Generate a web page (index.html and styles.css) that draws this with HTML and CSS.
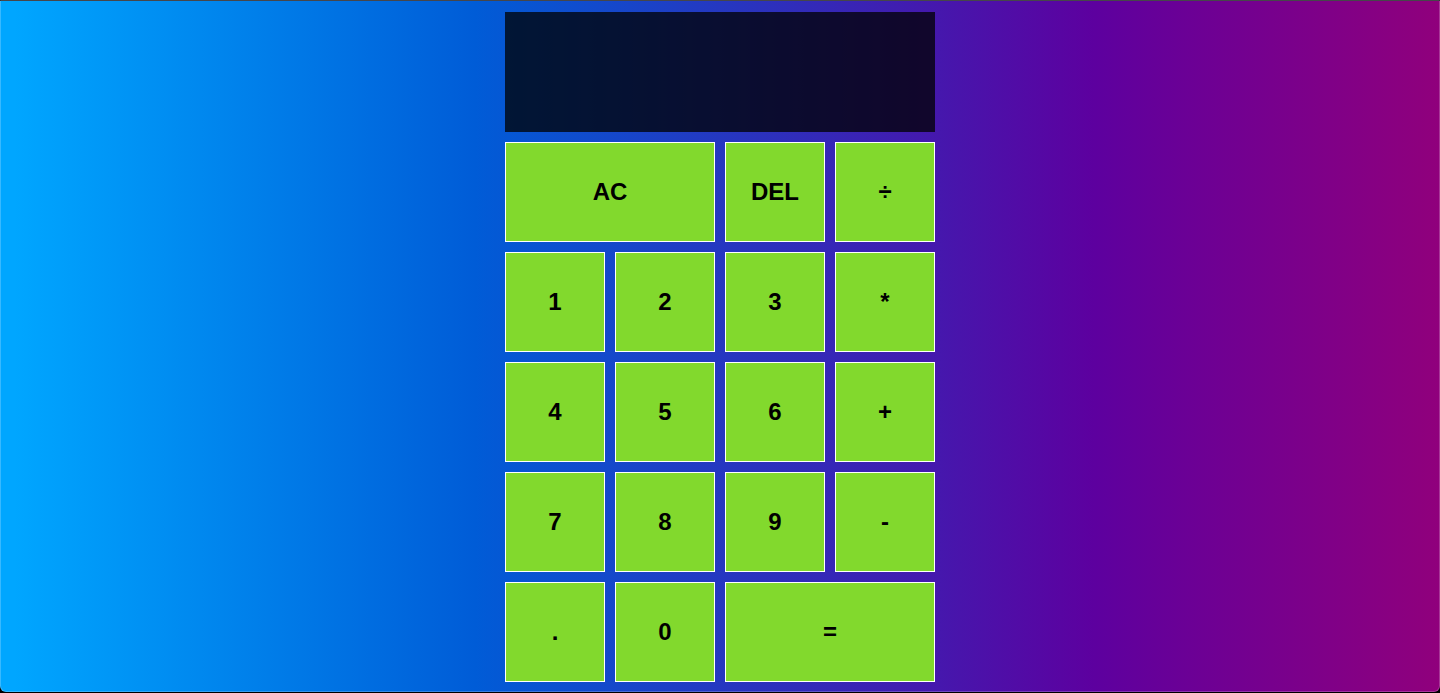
FILE: index.html
```html
<!DOCTYPE html>
<html lang="en">
<head>
<meta charset="utf-8">
<meta name="viewport" content="width=device-width, initial-scale=1">
<title>Calculator</title>
<link rel="stylesheet" href="styles.css">
</head>
<body>
<main class="calculator">
<output class="display" aria-label="Result"></output>
<button class="key wide" type="button">AC</button>
<button class="key" type="button">DEL</button>
<button class="key" type="button">÷</button>
<button class="key" type="button">1</button>
<button class="key" type="button">2</button>
<button class="key" type="button">3</button>
<button class="key" type="button">*</button>
<button class="key" type="button">4</button>
<button class="key" type="button">5</button>
<button class="key" type="button">6</button>
<button class="key" type="button">+</button>
<button class="key" type="button">7</button>
<button class="key" type="button">8</button>
<button class="key" type="button">9</button>
<button class="key" type="button">-</button>
<button class="key" type="button">.</button>
<button class="key" type="button">0</button>
<button class="key wide" type="button">=</button>
</main>
</body>
</html>
```
FILE: styles.css
```css
* {
  box-sizing: border-box;
}

html {
  background: #000;
}

body {
  margin: 0;
  min-height: calc(100vh - 1px);
  border: 1px solid rgba(255, 255, 255, 0.22);
  border-top-color: #46464a;
  border-radius: 0 0 6px 6px;
  background: linear-gradient(to right, #00a6ff 1%, #005cd7 33%, #5d009f 76%, #90007c) border-box;
  font-family: "Liberation Sans", Arial, sans-serif;
}

.calculator {
  display: grid;
  grid-template-columns: repeat(4, 100px);
  grid-template-rows: 120px repeat(5, 100px);
  gap: 10px;
  justify-content: center;
  padding-top: 11px;
}

.display {
  grid-column: 1 / -1;
  background: rgba(0, 0, 0, 0.75);
}

.key {
  padding: 0;
  border: 1px solid #fff;
  background: #82d92d;
  color: #000;
  font: bold 24px "Liberation Sans", Arial, sans-serif;
  cursor: pointer;
}

.wide {
  grid-column: span 2;
}
```
